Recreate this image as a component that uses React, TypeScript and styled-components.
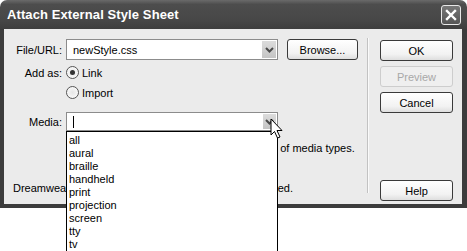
import React from "react";
import styled, {createGlobalStyle} from "styled-components";

const GlobalStyle = createGlobalStyle`
  html, body {
    margin: 0;
    padding: 0;
    background: #ffffff;
  }
  body {
    font-family: "Liberation Sans", Arial, sans-serif;
    font-size: 11px;
    color: #000;
  }
`;

const Page = styled.div`
  position: relative;
  width: 467px;
  height: 251px;
  overflow: hidden;
`;

const Dialog = styled.div`
  width: 467px;
  height: 208px;
  display: flex;
  flex-direction: column;
  box-sizing: border-box;
`;

const TitleBar = styled.div`
  height: 29px;
  display: flex;
  align-items: center;
  justify-content: space-between;
  padding: 0 6px 0 7px;
  border-radius: 7px 7px 0 0;
  background: linear-gradient(#6a6a6a 0%, #4d4d4d 15%, #474747 70%, #3e3e3e 100%);
  box-sizing: border-box;
`;

const Title = styled.span`
  color: #fff;
  font-weight: bold;
  font-size: 13px;
  letter-spacing: 0.1px;
`;

const CloseButton = styled.div`
  width: 20px;
  height: 20px;
  box-sizing: border-box;
  border: 1px solid #e8e8e8;
  border-radius: 3px;
  background: linear-gradient(#777, #555);
  display: flex;
  align-items: center;
  justify-content: center;
`;

const Body = styled.div`
  flex: 1;
  display: flex;
  background: #ebebeb;
  border: solid #3c3c3c;
  border-width: 0 5px 4px 4px;
`;

const FormPanel = styled.div`
  width: 359px;
  padding-top: 10px;
  display: flex;
  flex-direction: column;
`;

const Row = styled.div<{ top?: number }>`
  display: flex;
  align-items: center;
  margin-top: ${(p) => p.top ?? 0}px;
`;

const Label = styled.span`
  width: 58px;
  text-align: right;
  padding-right: 4px;
`;

const Indent = styled.div`
  margin-left: 62px;
`;

const Combo = styled.div<{ h: number }>`
  position: relative;
  width: 212px;
  height: ${(p) => p.h}px;
  box-sizing: border-box;
  background: #fff;
  border: 1px solid #8c8c8c;
  display: flex;
  align-items: center;
  padding-left: 6px;
`;

const ArrowBox = styled.div<{ w: number }>`
  position: absolute;
  right: 1px;
  top: 1px;
  bottom: 1px;
  width: ${(p) => p.w}px;
  background: linear-gradient(#dcdcdc, #c4c4c4);
  display: flex;
  align-items: center;
  justify-content: center;
`;

const Caret = styled.div`
  width: 1px;
  height: 12px;
  background: #000;
`;

const Button = styled.div<{ disabled?: boolean; w?: number }>`
  width: ${(p) => p.w ?? 73}px;
  height: 21px;
  box-sizing: border-box;
  border: 1px solid ${(p) => (p.disabled ? "#cdcdcd" : "#3a3a3a")};
  border-radius: 3px;
  background: ${(p) => (p.disabled ? "#efefef" : "linear-gradient(#ffffff, #f2f2f2 70%, #dedede)")};
  color: ${(p) => (p.disabled ? "#a8a8a8" : "#000")};
  display: flex;
  align-items: center;
  justify-content: center;
  font-size: 11px;
`;

const RadioRow = styled.label`
  display: flex;
  align-items: center;
  gap: 3px;
  height: 13px;
`;

const RadioDot = styled.span<{ checked?: boolean }>`
  width: 13px;
  height: 13px;
  box-sizing: border-box;
  border-radius: 50%;
  border: 1px solid #555;
  background: radial-gradient(#e6e6e6, #ffffff);
  display: flex;
  align-items: center;
  justify-content: center;
  &::after {
    content: "";
    width: 5px;
    height: 5px;
    border-radius: 50%;
    background: ${(p) => (p.checked ? "#333" : "transparent")};
  }
`;

const Note = styled.div<{ left: number; top: number }>`
  margin-left: ${(p) => p.left}px;
  margin-top: ${(p) => p.top}px;
  white-space: nowrap;
  line-height: 13px;
`;

const Separator = styled.div`
  width: 1px;
  margin: 9px 0 11px 4px;
  background: #c2c2c2;
  border-right: 1px solid #fafafa;
`;

const ButtonPanel = styled.div`
  padding: 11px 0 0 11px;
  display: flex;
  flex-direction: column;
  gap: 5px;
`;

const Spacer = styled.div`
  height: 57px;
`;

const MediaList = styled.ul`
  position: absolute;
  left: -1px;
  top: 18px;
  width: 212px;
  height: 121px;
  box-sizing: border-box;
  margin: 0;
  padding: 2px 0 0 2px;
  list-style: none;
  background: #fff;
  border: 1px solid #000;
  z-index: 5;
`;

const MediaItem = styled.li`
  line-height: 13px;
  height: 13px;
`;

const Pointer = styled.svg`
  position: absolute;
  left: 270px;
  top: 118px;
  z-index: 10;
`;

const Chevron = () => (
    <svg width="9" height="6" viewBox="0 0 9 6">
        <path d="M1 1 L4.5 4.5 L8 1" fill="none" stroke="#4a4a4a" strokeWidth="2"/>
    </svg>
);

const mediaTypes = ["all", "aural", "braille", "handheld", "print", "projection", "screen", "tty", "tv"];

export default function App() {
    return (
        <Page>
            <GlobalStyle/>
            <Dialog>
                <TitleBar>
                    <Title>Attach External Style Sheet</Title>
                    <CloseButton>
                        <svg width="12" height="12" viewBox="0 0 12 12">
                            <path d="M2 2 L10 10 M10 2 L2 10" stroke="#fff" strokeWidth="2.4" strokeLinecap="square"/>
                        </svg>
                    </CloseButton>
                </TitleBar>
                <Body>
                    <FormPanel>
                        <Row>
                            <Label>File/URL:</Label>
                            <Combo h={21}>
                                newStyle.css
                                <ArrowBox w={14}><Chevron/></ArrowBox>
                            </Combo>
                            <Button w={71} style={{marginLeft: 9}}>Browse...</Button>
                        </Row>
                        <Row top={6}>
                            <Label>Add as:</Label>
                            <RadioRow><RadioDot checked/>Link</RadioRow>
                        </Row>
                        <Row top={7}>
                            <Indent>
                                <RadioRow><RadioDot/>Import</RadioRow>
                            </Indent>
                        </Row>
                        <Row top={13}>
                            <Label>Media:</Label>
                            <Combo h={19}>
                                <Caret/>
                                <ArrowBox w={13}><Chevron/></ArrowBox>
                                <MediaList>
                                    {mediaTypes.map((m) => (
                                        <MediaItem key={m}>{m}</MediaItem>
                                    ))}
                                </MediaList>
                            </Combo>
                        </Row>
                        <Note left={62} top={11}>You may also enter a comma-separated list of media types.</Note>
                        <Note left={9} top={27}>Dreamweaver has sample style sheets to get you started.</Note>
                    </FormPanel>
                    <Separator/>
                    <ButtonPanel>
                        <Button>OK</Button>
                        <Button disabled>Preview</Button>
                        <Button>Cancel</Button>
                        <Spacer/>
                        <Button>Help</Button>
                    </ButtonPanel>
                </Body>
            </Dialog>
            <Pointer width="14" height="22" viewBox="0 0 14 22">
                <path d="M1 1 L1 17 L4.5 13.5 L7.5 20 L10 19 L7 12.5 L12 12.5 Z" fill="#fff" stroke="#000" strokeWidth="1"
                      strokeLinejoin="miter"/>
            </Pointer>
        </Page>
    );
}
